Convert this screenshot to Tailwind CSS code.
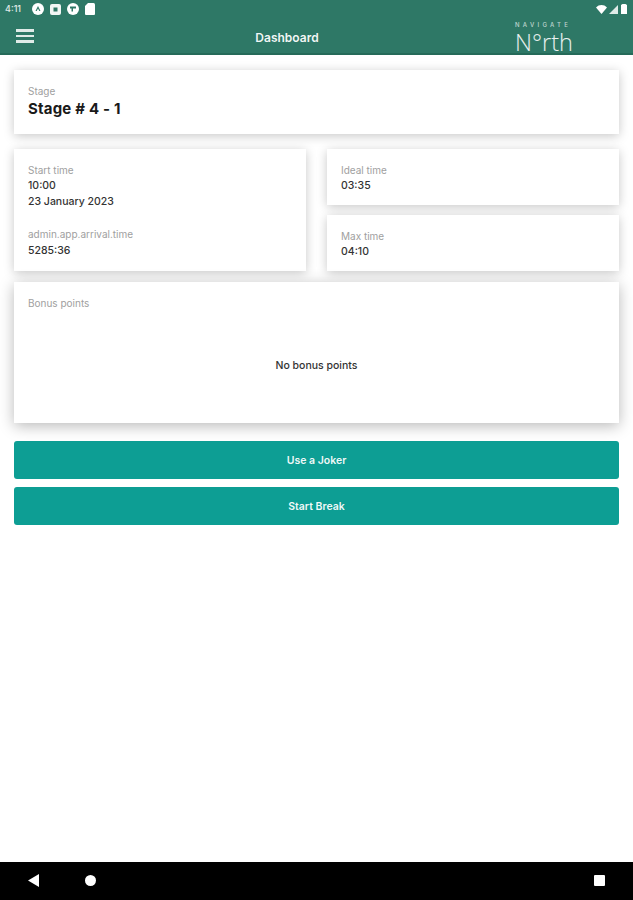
<!DOCTYPE html>
<html lang="en">
<head>
  <meta charset="UTF-8" />
  <meta name="viewport" content="width=device-width, initial-scale=1.0"/>
  <title>Dashboard</title>
  <script src="https://cdn.jsdelivr.net/npm/@tailwindcss/browser@4"></script>
</head>
<body class="bg-white font-['Inter',sans-serif]">
  <div class="h-[900px] w-[633px] flex flex-col overflow-hidden">
    <!-- status bar + app bar -->
    <header class="h-[55px] shrink-0 bg-[#2e7866] border-b-2 border-[#256a59] text-white">
      <div class="h-[18px] flex items-center justify-between pl-[5px] pr-[6px]">
        <div class="flex items-center">
          <span class="text-[9px] font-medium text-white/85 w-[27px]">4:11</span>
          <div class="flex items-center gap-[6px]">
            <svg class="w-[12px] h-[12px]" viewBox="0 0 12 12"><circle cx="6" cy="6" r="6" fill="#fff"/><path d="M6 3 8.500 8H7.300L6 5.400 4.700 8H3.500z" fill="#2e7866"/></svg>
            <svg class="w-[11px] h-[11px]" viewBox="0 0 11 11"><rect width="11" height="11" rx="2" fill="#f2f7f5"/><rect x="3.500" y="3.500" width="4" height="4" fill="#2e7866"/></svg>
            <svg class="w-[12px] h-[12px]" viewBox="0 0 12 12"><circle cx="6" cy="6" r="6" fill="#fff"/><path d="M3 3.500h6v2H6v3H4.500V5.500H3z" fill="#2e7866"/></svg>
            <svg class="w-[10px] h-[12px]" viewBox="0 0 10 12"><path d="M3 0h5.500A1.500 1.500 0 0 1 10 1.500V11a1 1 0 0 1-1 1H1a1 1 0 0 1-1-1V3z" fill="#fff"/></svg>
          </div>
        </div>
        <div class="flex items-center gap-[2px]">
          <svg class="w-[11px] h-[9px]" viewBox="0 0 11 9"><path d="M0 2.500C3-.8 8-.8 11 2.500L5.500 9z" fill="#fff"/></svg>
          <svg class="w-[9px] h-[9px]" viewBox="0 0 9 9"><path d="M9 0v9H0z" fill="#fff" opacity=".85"/></svg>
          <svg class="w-[6px] h-[10px] ml-[1px]" viewBox="0 0 6 10"><path d="M1.500 0h3L6 1v9H0V1z" fill="#fff"/></svg>
        </div>
      </div>
      <div class="h-[35px] relative flex items-center">
        <div class="ml-[16px] mt-[1px] w-[18px] flex flex-col gap-[3px]">
          <div class="h-[2.500px] bg-white/85"></div>
          <div class="h-[2.500px] bg-white/85"></div>
          <div class="h-[2.500px] bg-white/85"></div>
        </div>
        <div class="absolute left-[237px] w-[100px] top-[11.500px] text-center text-[12px] leading-[16px] font-semibold text-white/95">Dashboard</div>
        <div class="absolute left-[515px] top-[3px] w-[62px]">
          <div class="text-[6px] leading-[7px] tracking-[3.300px] whitespace-nowrap text-white/70 font-medium">NAVIGATE</div>
          <div class="text-[23.500px] leading-[24px] mt-[2px] font-light text-white/90 font-['Open_Sans',sans-serif]">N°rth</div>
        </div>
      </div>
    </header>

    <main class="flex-1 px-[14px] pt-[15px] text-[#333]">
      <section class="h-[64px] bg-white shadow-[0_2px_10px_rgba(0,0,0,0.22)] px-[14px] pt-[15px]">
        <div class="text-[10px] leading-[12px] text-[#a0a0a0]">Stage</div>
        <div class="text-[15px] leading-[20px] font-bold text-[#1a1a1a] tracking-[0.2px] mt-[2px]">Stage # 4 - 1</div>
      </section>

      <div class="flex justify-between mt-[15px]">
        <section class="w-[292px] h-[122px] bg-white shadow-[0_2px_10px_rgba(0,0,0,0.22)] px-[14px] pt-[15px]">
          <div class="text-[10px] leading-[12px] text-[#a0a0a0]">Start time</div>
          <div class="text-[10.500px] leading-[16px] font-medium mt-[2px]">10:00</div>
          <div class="text-[10.500px] leading-[16px] font-medium">23 January 2023</div>
          <div class="text-[10px] leading-[12px] text-[#a0a0a0] mt-[18px]">admin.app.arrival.time</div>
          <div class="text-[10.500px] leading-[16px] font-medium mt-[3px]">5285:36</div>
        </section>
        <div class="w-[292px] flex flex-col gap-[10px]">
          <section class="h-[56px] bg-white shadow-[0_2px_10px_rgba(0,0,0,0.22)] px-[14px] pt-[15px]">
            <div class="text-[10px] leading-[12px] text-[#a0a0a0]">Ideal time</div>
            <div class="text-[10.500px] leading-[16px] font-medium mt-[2px]">03:35</div>
          </section>
          <section class="h-[56px] bg-white shadow-[0_2px_10px_rgba(0,0,0,0.22)] px-[14px] pt-[15px]">
            <div class="text-[10px] leading-[12px] text-[#a0a0a0]">Max time</div>
            <div class="text-[10.500px] leading-[16px] font-medium mt-[2px]">04:10</div>
          </section>
        </div>
      </div>

      <section class="h-[141px] mt-[11px] bg-white shadow-[0_3px_14px_rgba(0,0,0,0.28)] px-[14px] pt-[15px] relative">
        <div class="text-[10px] leading-[12px] text-[#a0a0a0]">Bonus points</div>
        <div class="text-center text-[10.500px] leading-[14px] font-medium mt-[50px]">No bonus points</div>
      </section>

      <button class="block w-full h-[38px] mt-[18px] pt-[2px] rounded-[3px] bg-[#0d9e94] text-white/95 text-[10.500px] font-semibold">Use a Joker</button>
      <button class="block w-full h-[38px] mt-[8px] pt-[2px] rounded-[3px] bg-[#0d9e94] text-white/95 text-[10.500px] font-semibold">Start Break</button>
    </main>

    <!-- navigation bar -->
    <nav class="h-[38px] shrink-0 bg-black flex items-center relative">
      <svg class="absolute left-[28px] top-[12px] w-[11px] h-[13px]" viewBox="0 0 11 13"><path d="M11 0v13L0 6.500z" fill="#fff"/></svg>
      <div class="absolute left-[85px] top-[13px] w-[11px] h-[11px] rounded-full bg-white"></div>
      <div class="absolute left-[594px] top-[13px] w-[11px] h-[11px] rounded-[1px] bg-white"></div>
    </nav>
  </div>
</body>
</html>
